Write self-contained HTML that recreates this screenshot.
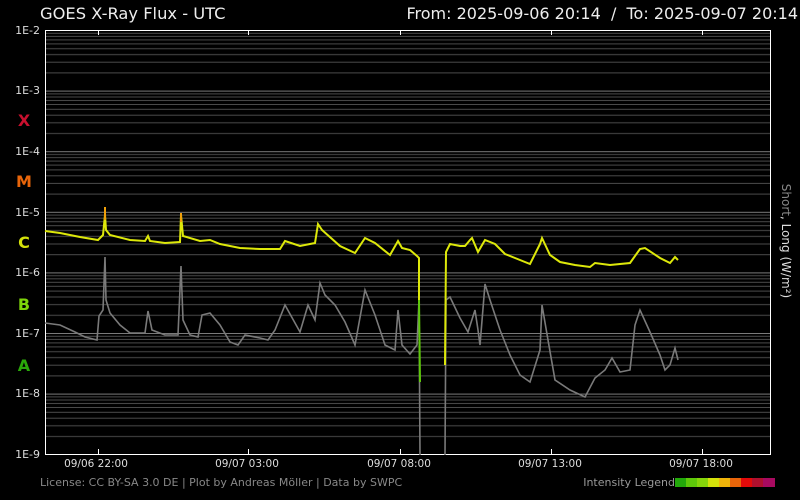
<!DOCTYPE html>
<html><head><meta charset="utf-8"><style>
html,body{margin:0;padding:0;background:#000;width:800px;height:500px;overflow:hidden}
svg{display:block}
text{font-family:"DejaVu Sans","Liberation Sans",sans-serif}
</style></head><body>
<svg width="800" height="500" viewBox="0 0 800 500" xmlns="http://www.w3.org/2000/svg">
<defs>
<pattern id="g" patternUnits="userSpaceOnUse" x="0" y="30" width="800" height="60.6">
<rect x="0" y="0" width="800" height="1" fill="#7a7a7a"/>
<rect x="0" y="2.8" width="800" height="1" fill="#4a4a4a"/>
<rect x="0" y="5.9" width="800" height="1" fill="#4a4a4a"/>
<rect x="0" y="9.4" width="800" height="1" fill="#4a4a4a"/>
<rect x="0" y="13.4" width="800" height="1" fill="#4a4a4a"/>
<rect x="0" y="18.2" width="800" height="1" fill="#4a4a4a"/>
<rect x="0" y="24.1" width="800" height="1" fill="#4a4a4a"/>
<rect x="0" y="31.7" width="800" height="1" fill="#4a4a4a"/>
<rect x="0" y="42.4" width="800" height="1" fill="#4a4a4a"/>
</pattern>
</defs>
<rect width="800" height="500" fill="#000"/>
<rect x="45" y="30" width="725" height="424" fill="url(#g)"/>
<rect x="45.5" y="30.5" width="725" height="424" fill="none" stroke="#fff" stroke-width="1"/>
<g stroke="#fff" stroke-width="1">
<line x1="98.5" y1="30" x2="98.5" y2="35"/><line x1="248.5" y1="30" x2="248.5" y2="35"/><line x1="400.5" y1="30" x2="400.5" y2="35"/><line x1="551.5" y1="30" x2="551.5" y2="35"/><line x1="702.5" y1="30" x2="702.5" y2="35"/>
<line x1="98.5" y1="449" x2="98.5" y2="454"/><line x1="248.5" y1="449" x2="248.5" y2="454"/><line x1="400.5" y1="449" x2="400.5" y2="454"/><line x1="551.5" y1="449" x2="551.5" y2="454"/><line x1="702.5" y1="449" x2="702.5" y2="454"/>
</g>
<text x="40" y="19" font-size="16.3" fill="#eee">GOES X-Ray Flux - UTC</text>
<text x="798" y="19" font-size="16" fill="#eee" text-anchor="end">From: 2025-09-06 20:14&#160;&#160;/&#160;&#160;To: 2025-09-07 20:14</text>
<g font-size="11" fill="#ddd" text-anchor="end">
<text x="40" y="34">1E-2</text><text x="40" y="94">1E-3</text><text x="40" y="155">1E-4</text><text x="40" y="216">1E-5</text><text x="40" y="276">1E-6</text><text x="40" y="337">1E-7</text><text x="40" y="397">1E-8</text><text x="40" y="458">1E-9</text>
</g>
<g font-size="16" font-weight="bold" text-anchor="middle">
<text x="24" y="126" fill="#c8102e">X</text>
<text x="24" y="187" fill="#e8650a">M</text>
<text x="24" y="248" fill="#d4e10a">C</text>
<text x="24" y="310" fill="#7ed40a">B</text>
<text x="24" y="371" fill="#2aa80a">A</text>
</g>
<g font-size="10.5" fill="#ddd" text-anchor="middle">
<text x="96" y="467">09/06 22:00</text><text x="247" y="467">09/07 03:00</text><text x="399" y="467">09/07 08:00</text><text x="550" y="467">09/07 13:00</text><text x="701" y="467">09/07 18:00</text>
</g>
<text x="40" y="486" font-size="11" fill="#888">License: CC BY-SA 3.0 DE | Plot by Andreas Möller | Data by SWPC</text>
<text x="675" y="486" font-size="11" fill="#999" text-anchor="end">Intensity Legend</text>
<g>
<rect x="675" y="478" width="12" height="9" fill="#22a80a"/><rect x="686" y="478" width="12" height="9" fill="#5ec80a"/><rect x="697" y="478" width="12" height="9" fill="#86d40a"/><rect x="708" y="478" width="12" height="9" fill="#d4e10a"/><rect x="719" y="478" width="12" height="9" fill="#f0b40a"/><rect x="730" y="478" width="12" height="9" fill="#e8650a"/><rect x="741" y="478" width="12" height="9" fill="#e20a0a"/><rect x="752" y="478" width="12" height="9" fill="#b0102e"/><rect x="763" y="478" width="12" height="9" fill="#a80a60"/>
</g>
<text transform="translate(782,241) rotate(90)" font-size="12" text-anchor="middle"><tspan fill="#888">Short</tspan><tspan fill="#ddd">, Long (W/m²)</tspan></text>
<polyline fill="none" stroke="#7a7a7a" stroke-width="1.6" points="45,323 60,325 75,332 85,337 97,340 99,316 103,310 105,257 106,300 110,313 120,325 130,333 145,333 148,311 152,330 165,335 178,335 181,266 183,320 190,335 198,337 202,315 210,313 220,325 230,342 238,345 245,335 260,338 268,340 275,330 285,305 295,323 300,332 308,305 315,320 320,283 325,295 335,305 345,322 355,345 365,290 375,315 385,345 395,350 398,310 402,345 410,354 417,345 419,300 420,455"/>
<polyline fill="none" stroke="#7a7a7a" stroke-width="1.6" points="445,455 446,300 450,297 460,318 468,332 475,310 478,330 480,345 485,284 490,300 500,330 510,355 520,375 530,382 540,350 542,305 548,340 555,380 570,390 585,397 595,378 605,370 612,358 620,372 630,370 635,325 640,310 650,332 660,355 665,370 670,365 675,348 678,360"/>
<polyline fill="none" stroke="#dde80a" stroke-width="2" points="45,231 60,233 80,237 98,240 103,235 105,215 106,230 110,235 130,240 145,241 148,236 150,241 165,243 180,242 181,215 183,236 200,241 210,240 220,244 240,248 260,249 280,249 285,241 300,246 315,243 318,224 322,230 340,246 355,253 365,238 375,243 390,255 398,241 402,248 410,250 417,256 419,258 419,300"/>
<polyline fill="none" stroke="#f0a00a" stroke-width="2" points="105,220 105,207"/>
<polyline fill="none" stroke="#f0a00a" stroke-width="2" points="181,222 181,213"/>
<polyline fill="none" stroke="#5ec80a" stroke-width="2" points="419,300 420,382"/>
<polyline fill="none" stroke="#dde80a" stroke-width="2" points="445,365 446,252 450,244 460,246 465,246 470,240 472,238 478,252 485,240 495,244 505,254 515,258 530,264 540,244 542,238 550,255 560,262 575,265 590,267 595,263 610,265 630,263 640,249 645,248 660,258 670,263 675,257 678,260"/>
</svg>
</body></html>
